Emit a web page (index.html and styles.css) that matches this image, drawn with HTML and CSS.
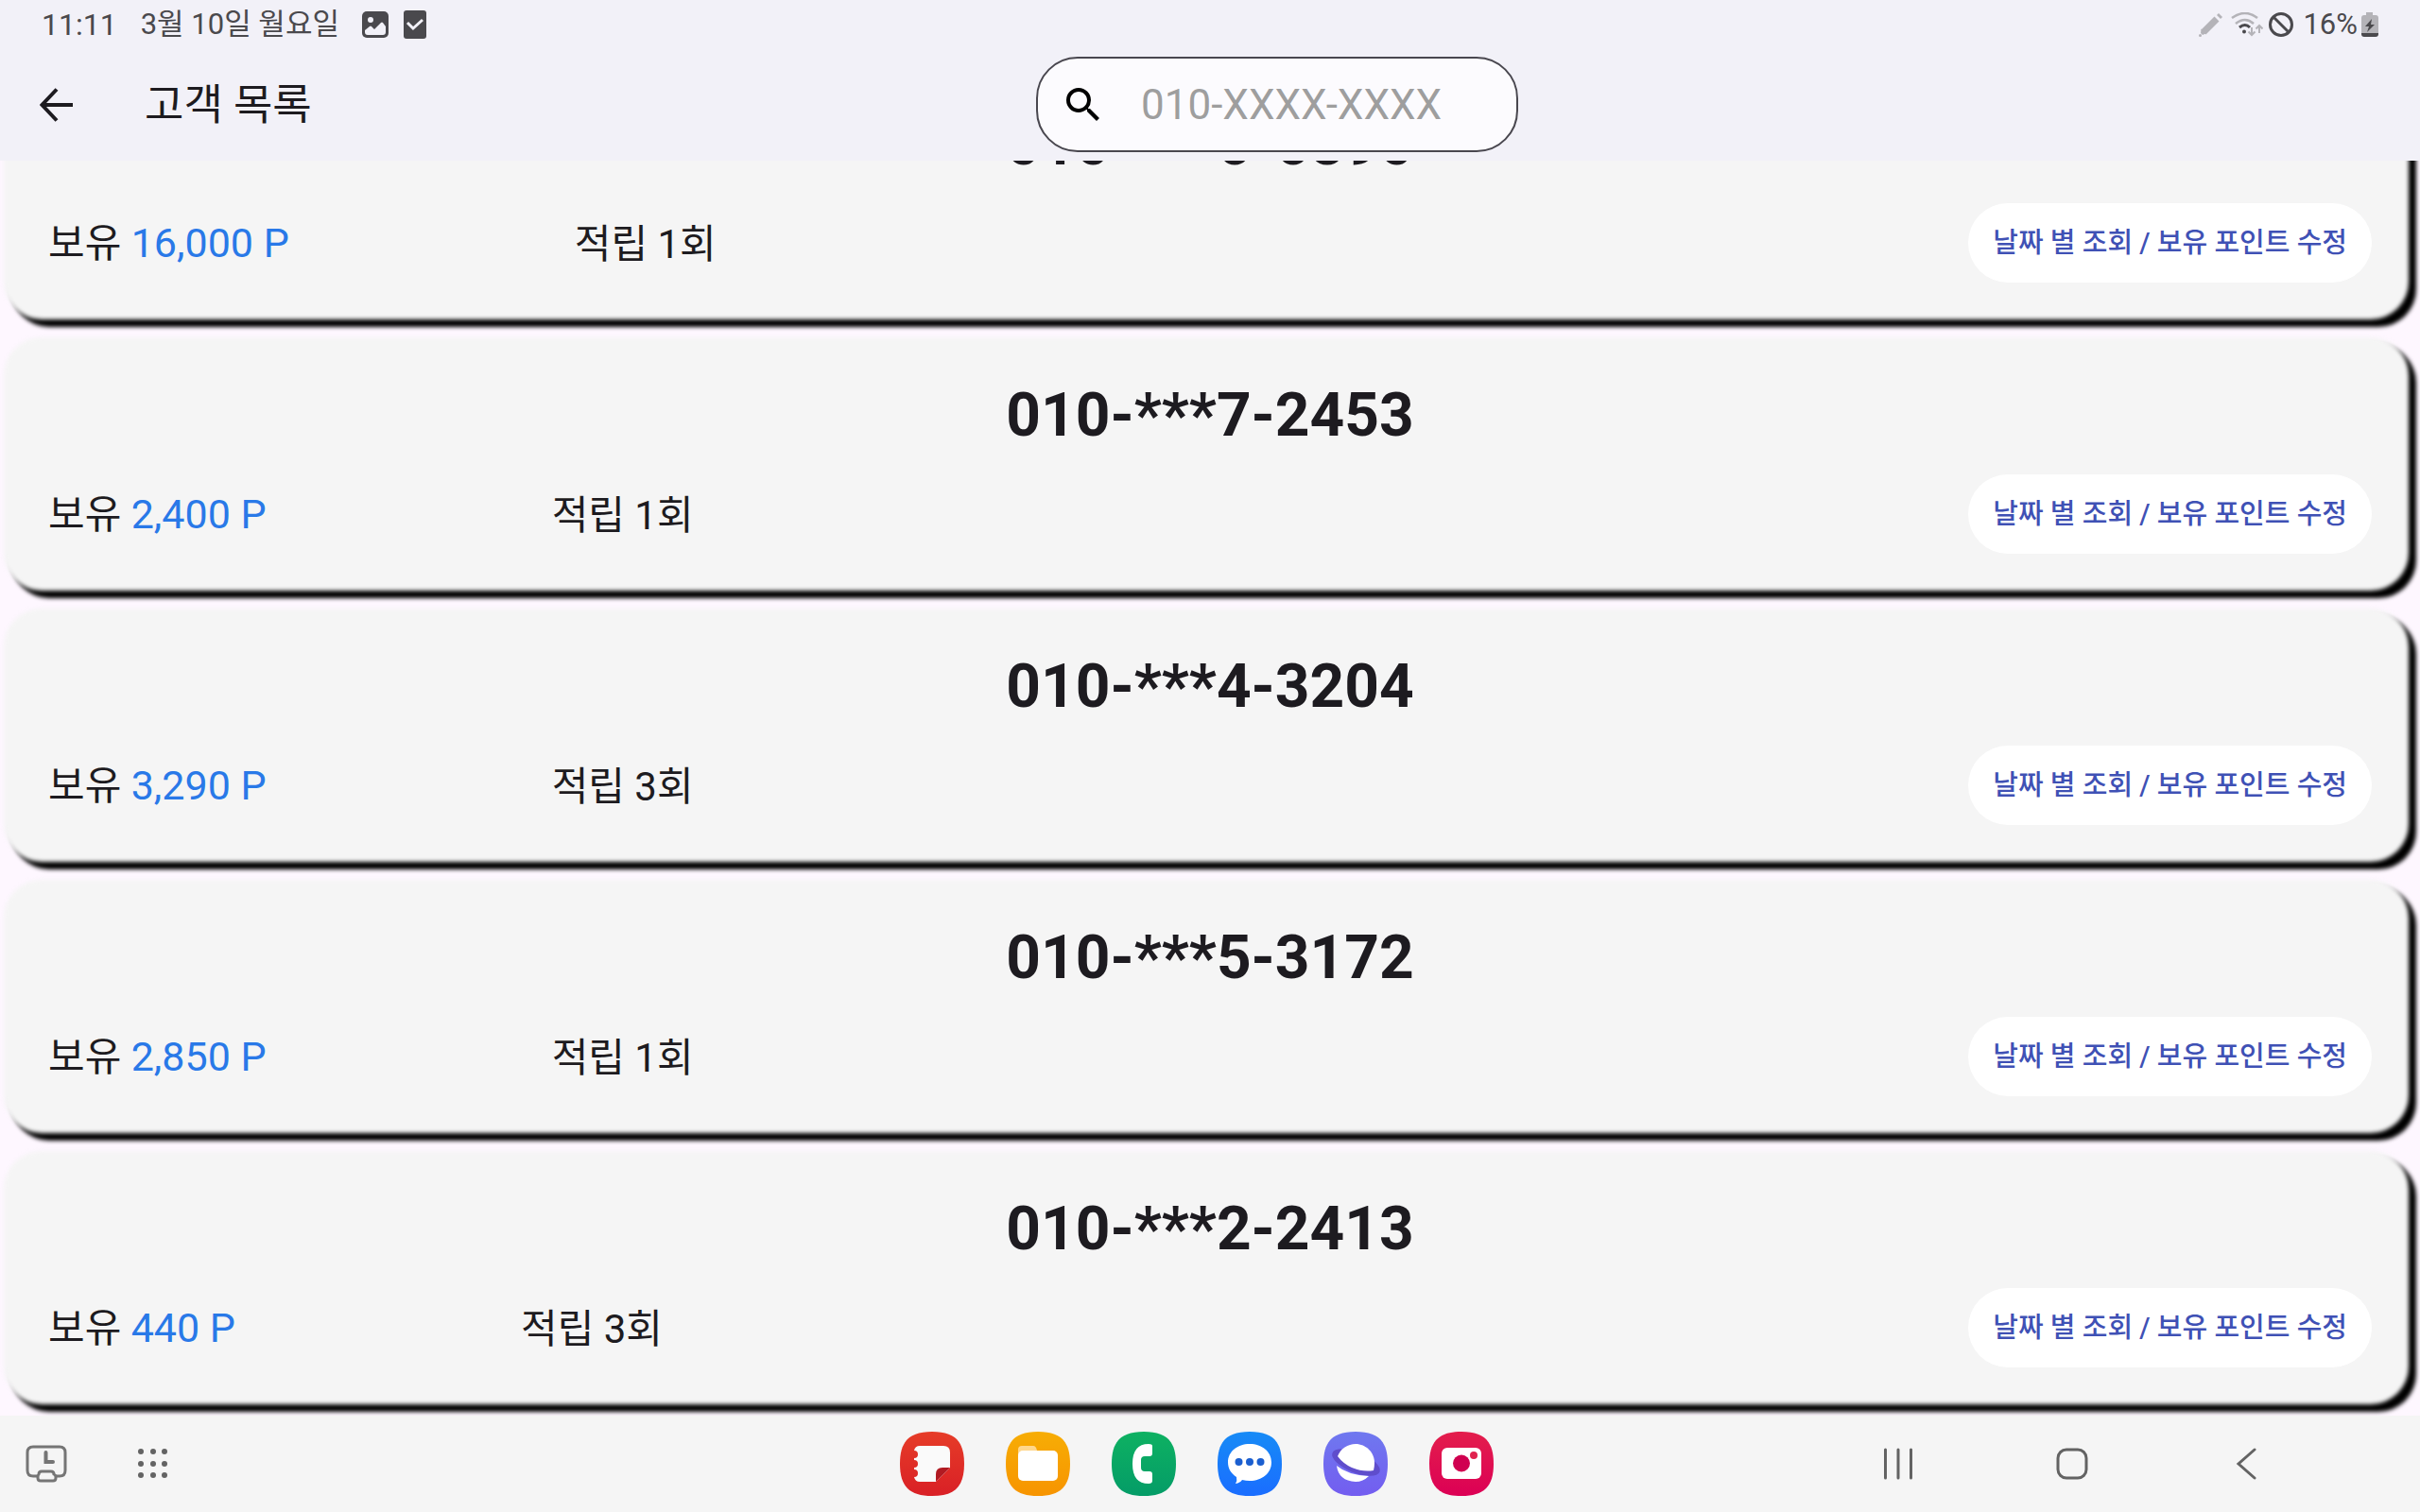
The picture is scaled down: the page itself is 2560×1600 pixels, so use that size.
FILE: index.html
```html
<!DOCTYPE html>
<html lang="ko">
<head>
<meta charset="utf-8">
<meta name="viewport" content="width=device-width, initial-scale=1">
<title>고객 목록</title>
<link rel="stylesheet" href="styles.css">
</head>
<body>
<header class="top">
  <div class="status">
    <span class="clock">11:11</span>
    <span class="date">3월 10일 월요일</span>
    <svg class="status-image" width="28" height="28" viewBox="0 0 28 28"><rect width="28" height="28" rx="5" fill="#4a494d"/><circle cx="9" cy="9" r="3" fill="#f2f1f8"/><path d="M3 20l5-4q1-1 2 0l3 3 7-7q1-1 2 0l3 4v6q0 3-3 3H6q-3 0-3-3z" fill="#f2f1f8"/></svg>
    <svg class="status-check" width="24" height="30" viewBox="0 0 24 30"><rect width="24" height="30" rx="3" fill="#4a494d"/><path d="M4 13l6 6 10-9" fill="none" stroke="#f2f1f8" stroke-width="3"/></svg>
    <div class="status-right">
      <svg width="26" height="26" viewBox="0 0 26 26"><path d="M5 21L19 7" stroke="#b4b3b8" stroke-width="7"/><path d="M21 1l4 4-2 2-4-4z" fill="#b4b3b8"/><path d="M2.500 17.500l5 5L4 24l-2-2z" fill="#b4b3b8"/><circle cx="1.500" cy="24.500" r="1.500" fill="#b4b3b8"/></svg>
      <svg class="wifi" width="34" height="26" viewBox="0 0 34 26"><g fill="none" stroke="#b4b3b8" stroke-width="2.600"><path d="M1 6q14-10 27 0M5 12q10-8 19 0"/><path d="M22 16v8M18.500 20.500L22 24l3.500-3.500M30 22v-8M26.500 17.500L30 14l3.500 3.500" stroke-width="2"/></g><path d="M9 16q6-5 11 0" fill="none" stroke="#4a494d" stroke-width="3"/><circle cx="14" cy="20.500" r="2" fill="#4a494d"/></svg>
      <svg class="blocked" width="26" height="26" viewBox="0 0 26 26"><circle cx="13" cy="13" r="11.500" fill="none" stroke="#4a494d" stroke-width="3"/><path d="M5 5l16 16" stroke="#4a494d" stroke-width="3"/></svg>
      <span>16%</span>
      <svg class="battery" width="18" height="26" viewBox="0 0 18 26"><path d="M5 0h7v3h3q3 0 3 3v16H0V6q0-3 3-3h2z" fill="#b4b3b8"/><path d="M0 22h18v1q0 3-3 3H3q-3 0-3-3z" fill="#4a494d"/><path d="M11 7l-7 8h4l-2 6 8-8h-4z" fill="#4a494d"/></svg>
    </div>
  </div>
  <div class="appbar">
    <div class="heading">
      <button class="icon-button" aria-label="뒤로"><svg width="36" height="36" viewBox="0 0 36 36"><path d="M35 18H3M18 1.500L2.500 18 18 34.500" fill="none" stroke="#1d1b20" stroke-width="4"/></svg></button>
      <h1>고객 목록</h1>
    </div>
    <label class="search">
      <svg width="48" height="48" viewBox="0 0 24 24" aria-label="검색"><path d="M15.500 14h-.79l-.28-.27A6.470 6.470 0 0 0 16 9.500 6.500 6.500 0 1 0 9.500 16c1.610 0 3.090-.59 4.230-1.570l.27.28v.79l5 4.990L20.490 19l-4.990-5zm-6 0C7.010 14 5 11.990 5 9.500S7.010 5 9.500 5 14 7.010 14 9.500 11.990 14 9.500 14z"/></svg>
      <input type="text" placeholder="010-XXXX-XXXX" aria-label="전화번호 검색">
    </label>
  </div>
</header>

<main class="list">
  <article class="card"><h2>010-***6-6890</h2><div class="row"><p class="points">보유 <span>16,000 P</span></p><p class="visits">적립 1회</p><button class="edit">날짜 별 조회 / 보유 포인트 수정</button></div></article>
  <article class="card"><h2>010-***7-2453</h2><div class="row"><p class="points">보유 <span>2,400 P</span></p><p class="visits">적립 1회</p><button class="edit">날짜 별 조회 / 보유 포인트 수정</button></div></article>
  <article class="card"><h2>010-***4-3204</h2><div class="row"><p class="points">보유 <span>3,290 P</span></p><p class="visits">적립 3회</p><button class="edit">날짜 별 조회 / 보유 포인트 수정</button></div></article>
  <article class="card"><h2>010-***5-3172</h2><div class="row"><p class="points">보유 <span>2,850 P</span></p><p class="visits">적립 1회</p><button class="edit">날짜 별 조회 / 보유 포인트 수정</button></div></article>
  <article class="card"><h2>010-***2-2413</h2><div class="row"><p class="points">보유 <span>440 P</span></p><p class="visits">적립 3회</p><button class="edit">날짜 별 조회 / 보유 포인트 수정</button></div></article>
</main>

<nav class="taskbar">
  <div class="tools">
    <button class="icon-button" aria-label="최근 사용"><svg width="44" height="40" viewBox="0 0 44 40" fill="none" stroke="#757575" stroke-width="3"><path d="M12 33H8q-6 0-6-6V8q0-6 6-6h28q6 0 6 6v19q0 6-6 6h-4"/><path d="M17 28h10q3 0 3 3 2 1 2 3v1q0 3-3 3H16q-3 0-3-3v-1q0-2 1-3 0-3 3-3z"/><path d="M21.500 8v10H29" stroke-width="4" stroke-linecap="round"/></svg></button>
    <button class="icon-button" aria-label="모든 앱"><svg width="32" height="32" viewBox="0 0 32 32" fill="#636363"><circle cx="3" cy="3" r="3"/><circle cx="16" cy="3" r="3"/><circle cx="28" cy="3" r="3"/><circle cx="3" cy="16" r="3"/><circle cx="16" cy="16" r="3"/><circle cx="28" cy="16" r="3"/><circle cx="3" cy="28" r="3"/><circle cx="16" cy="28" r="3"/><circle cx="28" cy="28" r="3"/></svg></button>
  </div>
  <div class="apps">
    <button class="icon-button" aria-label="노트"><svg width="68" height="68" viewBox="0 0 68 68"><defs><linearGradient id="red" x2="0" y2="1"><stop stop-color="#e63c28"/><stop offset="1" stop-color="#d92026"/></linearGradient></defs><path d="M34 0C58 0 68 10 68 34S58 68 34 68 0 58 0 34 10 0 34 0z" fill="url(#red)"/><path d="M21 15h25q7 0 7 7v16L38 53H21q-5 0-6-5 4 0 4-4t-4-4q0-2 0-2 4 0 4-4t-4-4v-2q4 0 4-4t-4-4q1-5 6-5z" fill="#fafafa"/><path d="M38 53V45q0-7 7-7h8z" fill="#b11a22"/></svg></button>
    <button class="icon-button" aria-label="내 파일"><svg width="68" height="68" viewBox="0 0 68 68"><defs><linearGradient id="amber" x2="0" y2="1"><stop stop-color="#f7ad05"/><stop offset="1" stop-color="#f79400"/></linearGradient></defs><path d="M34 0C58 0 68 10 68 34S58 68 34 68 0 58 0 34 10 0 34 0z" fill="url(#amber)"/><path d="M13 28V19q0-4 4-4h12q3 0 4 5v6z" fill="#ffd78c"/><rect x="13" y="20" width="42" height="32" rx="5" fill="#fff"/></svg></button>
    <button class="icon-button" aria-label="전화"><svg width="68" height="68" viewBox="0 0 68 68"><defs><linearGradient id="green" x2="0" y2="1"><stop stop-color="#0eb162"/><stop offset="1" stop-color="#049c67"/></linearGradient></defs><path d="M34 0C58 0 68 10 68 34S58 68 34 68 0 58 0 34 10 0 34 0z" fill="url(#green)"/><path d="M43 15v8q0 3-3 3h-5q-4 0-4 4v8q0 4 4 4h5q3 0 3 3v7q0 3-4 3-17 0-17-21 0-21 17-21 4 0 4 2z" fill="#fff"/></svg></button>
    <button class="icon-button" aria-label="메시지"><svg width="68" height="68" viewBox="0 0 68 68"><defs><linearGradient id="blue" x2="0" y2="1"><stop stop-color="#178bf6"/><stop offset="1" stop-color="#1a6dff"/></linearGradient></defs><path d="M34 0C58 0 68 10 68 34S58 68 34 68 0 58 0 34 10 0 34 0z" fill="url(#blue)"/><path d="M34 13c13 0 23 8 23 19.500S47 52 34 52q-4 0-8-1-2 3-7 4 2-3 1-7C14 44 11 39 11 32.500 11 21 21 13 34 13z" fill="#fff"/><g fill="#1b5fd0"><circle cx="22.500" cy="32" r="4"/><circle cx="34" cy="32" r="4"/><circle cx="45.500" cy="32" r="4"/></g></svg></button>
    <button class="icon-button" aria-label="인터넷"><svg width="68" height="68" viewBox="0 0 68 68"><defs><linearGradient id="violet" x2="0" y2="1"><stop stop-color="#6f78ef"/><stop offset="1" stop-color="#735df0"/></linearGradient></defs><path d="M34 0C58 0 68 10 68 34S58 68 34 68 0 58 0 34 10 0 34 0z" fill="url(#violet)"/><ellipse cx="34.500" cy="32.500" rx="27" ry="11" transform="rotate(22 34.500 32.500)" fill="#5f4dcc"/><path d="M15 26C18 18 26 13 34 13c11 0 20 9 20 20q0 4-1 8-11 2-23-3-9-4-15-12z" fill="#fff"/><path d="M14 36q12 10 34 11-6 6-14 6-18-1-20-17z" fill="#fff"/></svg></button>
    <button class="icon-button" aria-label="카메라"><svg width="68" height="68" viewBox="0 0 68 68"><defs><linearGradient id="pink" x2="0" y2="1"><stop stop-color="#e31e4c"/><stop offset="1" stop-color="#dc0055"/></linearGradient></defs><path d="M34 0C58 0 68 10 68 34S58 68 34 68 0 58 0 34 10 0 34 0z" fill="url(#pink)"/><rect x="13" y="17" width="42" height="33" rx="6" fill="#fff"/><circle cx="34" cy="33.500" r="9" fill="#d00050"/><circle cx="47" cy="25" r="4" fill="#e0234f"/></svg></button>
  </div>
  <div class="system">
    <button class="icon-button" aria-label="최근 앱"><svg width="68" height="34" viewBox="0 0 68 34" stroke="#636363" stroke-width="3" stroke-linecap="round"><path d="M20.500 2v30M34 2v30M47.500 2v30"/></svg></button>
    <button class="icon-button" aria-label="홈"><svg width="68" height="34" viewBox="0 0 68 34"><rect x="19" y="2" width="30" height="30" rx="9" fill="none" stroke="#636363" stroke-width="3"/></svg></button>
    <button class="icon-button" aria-label="뒤로 가기"><svg width="68" height="34" viewBox="0 0 68 34"><path d="M43 2L26 17l17 15" fill="none" stroke="#636363" stroke-width="3" stroke-linecap="round"/></svg></button>
  </div>
</nav>
</body>
</html>
```
FILE: styles.css
```css
* { box-sizing: border-box; }

body {
  margin: 0;
  height: 100vh;
  display: flex;
  flex-direction: column;
  background: #fef7ff;
  color: #1d1b20;
  font-family: Roboto, "Noto Sans CJK KR", sans-serif;
}

h1, h2, p { margin: 0; font-weight: 400; }
button, input { font: inherit; color: inherit; border: 0; padding: 0; }
svg { display: block; flex: none; }

.icon-button { background: none; }

/* Status bar and app bar */
.top {
  flex: none;
  background: #f2f1f8;
  padding-bottom: 9px;
  position: relative;
  z-index: 1;
}

.status {
  display: flex;
  align-items: center;
  height: 52px;
  padding: 0 44px;
  font-size: 31px;
  line-height: 40px;
  color: #4a494d;
}
.clock { font-size: 32px; }
.date { margin-left: 25px; }
.status-image { margin-left: 24px; }
.status-check { margin-left: 16px; }
.status-right {
  display: flex;
  align-items: center;
  margin-left: auto;
}
.wifi { margin-left: 8px; }
.blocked { margin: 0 10px 0 6px; }
.battery { margin-left: 4px; }

.appbar {
  display: grid;
  grid-template-columns: 1096fr 510px 954fr;
  align-items: center;
  padding-top: 8px;
}
.heading {
  display: flex;
  align-items: center;
  gap: 75px;
  padding-left: 42px;
}
h1 { font-size: 45px; line-height: 60px; padding-top: 2px; }

.search {
  display: flex;
  align-items: center;
  gap: 37px;
  height: 101px;
  padding: 0 24px;
  border: 2px solid #49474f;
  border-radius: 44px;
  background: #fcfbfe;
}
.search input {
  flex: 1;
  min-width: 0;
  background: none;
  outline: 0;
  font-size: 44px;
  line-height: 60px;
}
.search input::placeholder { color: #9e9e9e; opacity: 1; }

/* Customer cards, scrolled to the latest entries */
.list {
  flex: 1;
  min-height: 0;
  overflow: hidden;
  display: flex;
  flex-direction: column;
  justify-content: flex-end;
  gap: 19px;
  padding: 0 8px 8px;
}

.card {
  flex: none;
  position: relative;
  isolation: isolate;
  padding: 40px 43px 43px 43px;
  border-radius: 40px;
  box-shadow: 0 0 3px #00000026;
}
.card::before, .card::after {
  content: "";
  position: absolute;
  z-index: -1;
  border-radius: 40px;
  filter: blur(2px);
}
.card::before { inset: 4px -4px -4px 4px; background: #000; }
.card::after { inset: -4px 4px 4px -4px; background: #f5f5f5; }

.card h2 {
  font-size: 64px;
  font-weight: 700;
  line-height: 78px;
  text-align: center;
}

.row {
  display: flex;
  align-items: center;
  height: 84px;
  margin-top: 23px;
  font-size: 42px;
  line-height: 60px;
}
.points span { color: #2979e8; font-size: 43px; }
.visits { margin-left: 302px; padding-top: 4px; }

.edit {
  height: 84px;
  margin-left: auto;
  padding: 0 26px;
  border-radius: 42px;
  background: #fff;
  color: #3f51b5;
  font-size: 29px;
  font-weight: 500;
}

/* Task bar */
.taskbar {
  flex: none;
  display: grid;
  grid-template-columns: 952fr 628px 980fr;
  align-items: center;
  height: 102px;
  padding-bottom: 1px;
  background: #f5f5f5;
}
.tools, .apps, .system { display: flex; align-items: center; }
.tools { gap: 75px; padding-left: 27px; }
.apps { gap: 44px; }
.system { gap: 116px; justify-content: flex-end; padding-right: 150px; }
```
